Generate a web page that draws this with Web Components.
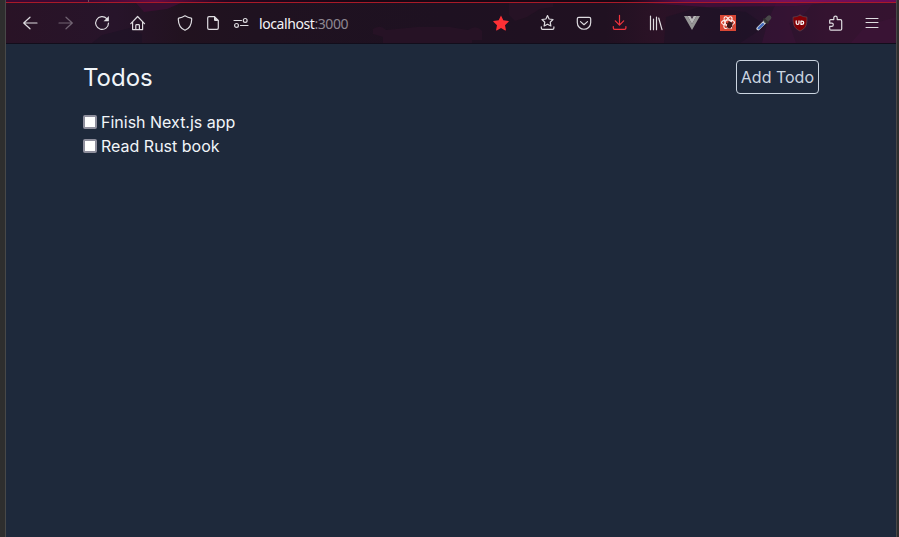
<!DOCTYPE html>
<html lang="en">
<head>
<meta charset="utf-8">
<title>Todos</title>
<style>
html,body{margin:0;height:100%;overflow:hidden;background:#2e2e2e}
body{font-family:Inter,sans-serif}
</style>
</head>
<body>
<app-window>
  <browser-bar slot="bar"></browser-bar>
  <todo-page>
    <todo-item>Finish Next.js app</todo-item>
    <todo-item>Read Rust book</todo-item>
  </todo-page>
</app-window>
<script>
const define = (name, html) => customElements.define(name, class extends HTMLElement {
  constructor() {
    super();
    this.attachShadow({ mode: 'open' }).innerHTML = html;
  }
});

const icons = {
  back: '<path d="M15 8H1.8M8 2.2 1.7 8 8 13.8"/>',
  forward: '<path d="M1 8h13.2M8 2.2 14.3 8 8 13.8"/>',
  reload: '<path d="M12.8 3.7A6.4 6.4 0 1 0 14.5 8"/><path d="M14.9 1v5.2H9.6z" fill="currentColor" stroke="none"/>',
  home: '<path d="M.8 8.700 7.600 1.500 14.500 8.700M2.600 7v7.600h10V7M5.800 14.500v-4.100q0-.8.8-.8h2q.8 0 .8.8v4.100"/>',
  shield: '<path d="M8 .8Q10.8 2.6 14.2 3.1q.6.3.5 1.2C14.600 9.900 12.400 13.600 8 15.300 3.600 13.600 1.400 9.900 1.300 4.300q-.1-.9.500-1.200Q5.200 2.600 8 .8z"/>',
  page: '<path d="M4 1.600h5.500L13.300 5.400V13q0 1.300-1.300 1.300H4Q2.700 14.300 2.700 13V2.900Q2.700 1.600 4 1.600z"/><path d="M9 1.300 13.600 6H10Q9 6 9 5z" fill="currentColor" stroke="none"/>',
  perms: '<path d="M1 5.500h7.500M7.500 10.500H15"/><circle cx="12.200" cy="5.400" r="1.900"/><circle cx="3.500" cy="10.400" r="1.900"/>',
  star: '<path d="M8 .6 10.300 5.300 15.500 6Q16 6.200 15.600 6.700L12 10.200 12.900 15.100Q12.800 15.800 12.200 15.500L8 13 3.800 15.500Q3.200 15.800 3.100 15.100L4 10.200.4 6.700Q0 6.200.5 6L5.700 5.300z" fill="#ff3035" stroke="none"/>',
  library: '<path d="M7.500.6 9.100 4l3.900.5-2.800 2.700.7 3.800-3.400-1.800L4.100 11l.7-3.800L2 4.500 5.900 4z"/><path d="M1.300 11.800V13q0 1.300 1.300 1.300h10q1.300 0 1.300-1.300v-1.200"/>',
  pocket: '<path d="M2.800 2.300h10.400q1.500 0 1.500 1.500V7.500C14.700 16.500 1.300 16.500 1.300 7.500V3.800q0-1.500 1.500-1.500z"/><path d="M4.500 6.600 8 9.700l3.500-3.100"/>',
  download: '<g stroke="#f2343d"><path d="M7.500 .3v9.500M3.300 5.900l4.200 4.200 4.200-4.200M1.300 11.500V13q0 1.400 1.400 1.400h9.800q1.400 0 1.400-1.400v-1.500"/></g>',
  books: '<path d="M2.500 1v13.700M5.500 4v10.700M8.500 2v12.700M10.700 3l3.300 11.700"/>',
  vue: '<path d="M0 1h3.500L8 9.100 12.500 1H16L8 15z" fill="#969696" stroke="none"/><path d="M3.500 1h3L8 3.800 9.500 1h3L8 9.100z" fill="#b8b8b8" stroke="none"/><path d="M6.500 1h3L8 3.800z" fill="#49394b" stroke="none"/>',
  react: '<path d="M0 0h16v16H0z" fill="#d94735" stroke="none"/><g fill="none" stroke="#fff0ed" stroke-width="1.050"><ellipse cx="8" cy="7.600" rx="6.500" ry="2.600"/><ellipse cx="8" cy="7.600" rx="6.500" ry="2.600" transform="rotate(60 8 7.600)"/><ellipse cx="8" cy="7.600" rx="6.500" ry="2.600" transform="rotate(120 8 7.600)"/></g><ellipse cx="9.700" cy="10" rx="2.500" ry="3.400" transform="rotate(25 9.700 10)" fill="#3c1718" stroke="none"/><path d="M6.300 8.200 12.500 12M7 12l5.500-4M9 6.500l1 7" stroke="#3c1718" stroke-width="1"/>',
  picker: '<path d="M2.200 13.600 9.700 6.100" stroke="#cfd3d8" stroke-width="3.600"/><path d="M2.700 13.300 6.900 9.100" stroke="#4169bd" stroke-width="2.300"/><path d="M9.900 5.800 13.100 2.600" stroke="#494949" stroke-width="4.600"/><path d="M8 4.100 11.700 7.800" stroke="#30302f" stroke-width="2"/>',
  ublock: '<path d="M8 .2Q11 2 14.900 2.100C15.200 9.200 14.100 13.400 8 16 1.900 13.400.8 9.200 1.100 2.100Q5 2 8 .2z" fill="#800006" stroke="#655057" stroke-width=".6"/><path d="M4.200 5.900v2q0 1.500 1.400 1.500T7 7.900v-2M9 6h.9q1.800 0 1.800 1.700T9.900 9.400H9z" stroke="#fff" stroke-width="1.250"/>',
  puzzle: '<path d="M1.700 8.200V5.600q0-1 1-1h3.100V2.900q0-1.800 1.700-1.800t1.700 1.800v1.700h3.200q1.300 0 1.300 1.300v8q0 1.200-1.300 1.200H2.900q-1.200 0-1.200-1.200v-2.500h2q1.600 0 1.600-1.600T3.700 8.200z"/>',
  menu: '<path d="M2 3.500h12M2 7.500h12M2 12.500h12" stroke-width="1.100"/>'
};

customElements.define('bar-icon', class extends HTMLElement {
  constructor() {
    super();
    this.attachShadow({ mode: 'open' });
  }
  connectedCallback() {
    this.shadowRoot.innerHTML = `<style>:host{display:block;flex:none;width:16px;height:16px;color:#dedce0}svg{display:block;overflow:visible}</style>
      <svg width="16" height="16" viewBox="0 0 16 16" fill="none" stroke="currentColor" stroke-width="1.200" stroke-linecap="round" stroke-linejoin="round">${icons[this.getAttribute('name')]}</svg>`;
  }
});

const group = names => names.split(' ').map(n => `<bar-icon name="${n}"></bar-icon>`).join('');

define('browser-bar', `<style>
  :host{display:block;height:44px;box-sizing:border-box}
  .tabs{height:2px;background:linear-gradient(90deg,#3c0833 0,#3c0833 82px,#6c5064 82px,#6c5064 83px,#3c0833 83px,#650a43 150px,#240720 220px,#180714 350px,#180714 620px,#5c0c50 680px,#78105a 780px,#6a0b57)}
  .line{height:1px;background:#a91a28}
  .bar{position:relative;height:40px;display:flex;align-items:center;padding:0 16px;
    background:linear-gradient(90deg,#291326 0,#27142a 110px,#21121f 180px,#1f1220 250px,#1e1121 440px,#201121 600px,#2b1226 650px,#25132b 740px,#341330 820px,#351330)}
  .art{position:absolute;inset:0;width:100%;height:100%}
  .group{position:relative;display:flex}
  .nav{gap:20px}.nav bar-icon[name=forward]{color:#726473}
  .site{gap:12px;margin-left:31px}
  .url{position:relative;margin-left:10px;padding-top:2px;font:400 14px/20px "Noto Sans","Open Sans",sans-serif;letter-spacing:-.42px;color:#f4f3f7;white-space:nowrap}
  .url span{color:#8e8791}
  .star{margin-left:auto;margin-right:31px}
  .end{height:1px;background:#120d1b}
</style>
<div class="tabs"></div><div class="line"></div>
<div class="bar">
  <svg class="art" viewBox="0 0 890 40" preserveAspectRatio="none">
    <g fill="#27112a"><path d="M367 26q8-5 13 1l31-3h33l18 3q8-6 14 1v9h-10v4h-89V34l-10-3zM503 0v12l6 6 12-4 13-8 13-2V0z" fill="#261225"/></g>
    <path d="M130 0h45l-14 6-23 3z" fill="#390f31"/>
    <path d="M96 32l28-7 12 6v9H86zM660 14l34-10 46 5 20 14-26 17h-76z" fill="#1d1325" opacity=".6"/>
    <path d="M770 0h37l-12 15-12 5 7 20h-34l6-22zM845 40l15-17 30-9v26z" fill="#42133b" opacity=".4"/>
    <path d="M640 0h180l-30 3-90 1z" fill="#4c0d3d" opacity=".7"/>
  </svg>
  <div class="group nav">${group('back forward reload home')}</div>
  <div class="group site">${group('shield page perms')}</div>
  <div class="url">localhost<span>:3000</span></div>
  <div class="group star">${group('star')}</div>
  <div class="group nav">${group('library pocket download books vue react picker ublock puzzle menu')}</div>
</div><div class="end"></div>`);

define('app-window', `<style>
  :host{display:flex;flex-direction:column;height:100vh;box-sizing:border-box;margin:0 2px 0 5px;border:solid #484848;border-width:0 1px;background:#1e293b}
</style><slot name="bar"></slot><slot></slot>`);

define('outline-button', `<style>
  :host{display:block;box-sizing:border-box;border:1px solid #cbd5e1;border-radius:4px;padding:4px;font-size:16px;line-height:24px;color:#cbd5e1}
</style><slot></slot>`);

define('todo-item', `<style>
  :host{display:flex;align-items:center;gap:4px;height:24px;font-size:16px;line-height:24px}
  input{appearance:none;box-sizing:border-box;width:14px;height:14px;margin:0;border:2px solid #8f8f9d;border-radius:2px;background:#fff}
</style><input type="checkbox"><label><slot></slot></label>`);

define('todo-page', `<style>
  :host{display:block;box-sizing:border-box;width:768px;padding:16px;margin-left:61px;color:#f1f5f9}
  header{display:flex;justify-content:space-between;align-items:center;margin-bottom:16px}
  h1{margin:0;padding-top:2px;font-size:24px;line-height:32px;font-weight:400}
</style>
<header><h1>Todos</h1><outline-button>Add Todo</outline-button></header>
<slot></slot>`);
</script>
</body>
</html>
